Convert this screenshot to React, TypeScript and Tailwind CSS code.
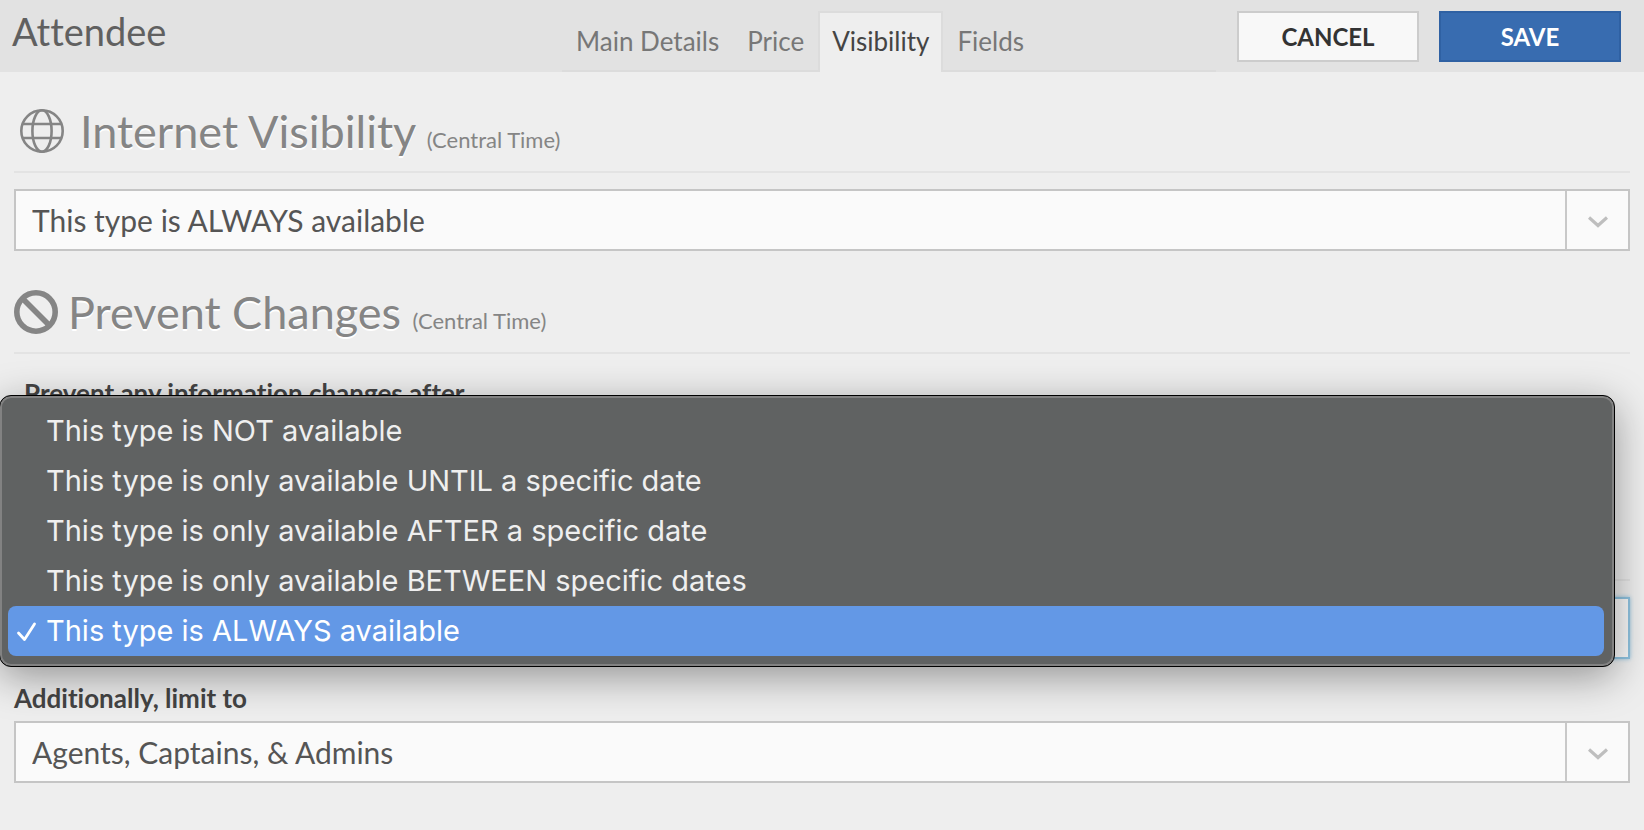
import type { ReactNode, SelectHTMLAttributes } from "react";

const TABS = ["Main Details", "Price", "Visibility", "Fields"];

const AVAILABILITY = [
  "This type is NOT available",
  "This type is only available UNTIL a specific date",
  "This type is only available AFTER a specific date",
  "This type is only available BETWEEN specific dates",
  "This type is ALWAYS available",
];

const CURRENT = "This type is ALWAYS available";

function GlobeIcon() {
  return (
    <svg viewBox="0 0 56 44" fill="none" stroke="currentColor" strokeWidth="2.6" className="w-14 h-11 shrink-0" aria-hidden="true">
      <circle cx="28" cy="22" r="20.7" />
      <ellipse cx="28" cy="22" rx="9.6" ry="20.7" />
      <line x1="8.5" y1="15" x2="47.5" y2="15" />
      <line x1="8.5" y1="29" x2="47.5" y2="29" />
    </svg>
  );
}

function BanIcon() {
  return (
    <svg viewBox="0 0 44 44" fill="none" stroke="currentColor" strokeWidth="5.6" className="w-11 h-11 shrink-0" aria-hidden="true">
      <circle cx="22" cy="22" r="19.2" />
      <line x1="9" y1="9" x2="35" y2="35" />
    </svg>
  );
}

function SectionTitle({ icon, title }: { icon: ReactNode; title: string }) {
  return (
    <div className="flex items-center gap-2.5 pb-[13px] border-b-2 border-[#e3e3e3] text-[#858585]">
      {icon}
      <h2 className="text-[45px] leading-[54px] [text-shadow:0_2px_0_#fff]">
        {title} <small className="text-[22px] leading-none [text-shadow:none]">(Central Time)</small>
      </h2>
    </div>
  );
}

function SelectBox({ children, ...props }: SelectHTMLAttributes<HTMLSelectElement>) {
  return (
    <div className="relative">
      <select
        {...props}
        className="block w-full h-[62px] appearance-none rounded-none border-2 border-[#c5c5c5] bg-[#fafafa] pl-4 pr-20 text-[30px] text-[#555] outline-none"
      >
        {children}
      </select>
      <div className="absolute inset-y-0.5 right-0.5 w-[63px] border-l-2 border-[#c8c8c8] flex items-center justify-center pointer-events-none">
        <svg viewBox="0 0 20 12" fill="none" stroke="#bebebe" strokeWidth="3.2" className="w-5 h-3 mt-1" aria-hidden="true">
          <path d="M1 1.5 L10 9.5 L19 1.5" />
        </svg>
      </div>
    </div>
  );
}

function AvailabilityMenu() {
  return (
    <ul
      role="listbox"
      aria-label="Availability"
      className="absolute -left-[15px] right-[15px] -bottom-2 z-10 rounded-[12px] border border-black bg-[#606262] pl-2 pr-2.5 py-2.5 text-[29px] leading-[50px] text-[#efefef] shadow-[inset_0_0_0_2px_#828282,0_10px_40px_rgba(0,0,0,0.38)] font-['Inter','Liberation_Sans',sans-serif]"
    >
      {AVAILABILITY.map((label) => {
        const selected = label === CURRENT;
        return (
          <li
            key={label}
            role="option"
            aria-selected={selected}
            className={
              selected
                ? "flex items-center h-[50px] rounded-[8px] bg-[#6398e6] text-white"
                : "flex items-center h-[50px]"
            }
          >
            <span className="w-[38px] pl-2 shrink-0">
              {selected && (
                <svg viewBox="0 0 22 22" fill="none" stroke="currentColor" strokeWidth="2.8" strokeLinecap="round" strokeLinejoin="round" className="w-[22px] h-[22px]" aria-hidden="true">
                  <path d="M2.5 13 L8.5 19.5 L18.5 4" />
                </svg>
              )}
            </span>
            {label}
          </li>
        );
      })}
    </ul>
  );
}

export default function App() {
  return (
    <div className="min-h-screen overflow-x-hidden bg-[#eee] text-[#444] font-['Lato','Liberation_Sans',sans-serif] [font-variant-ligatures:none]">
      <header className="h-[72px] bg-[#e2e2e2] grid grid-cols-[562fr_654fr_428fr]">
        <h1 className="pl-3 text-[38px] leading-[62px] text-[#606060]">Attendee</h1>
        <nav className="flex items-end border-b-2 border-[#dcdcdc]">
          {TABS.map((tab) => (
            <a
              key={tab}
              href="#"
              className={
                tab === "Visibility"
                  ? "h-[61px] -mb-0.5 px-3 border-2 border-b-0 border-[#dcdcdc] bg-[#eee] text-[26px] leading-[56px] text-[#444] whitespace-nowrap"
                  : "h-[61px] -mb-0.5 px-3 border-2 border-transparent text-[26px] leading-[56px] text-[#777] whitespace-nowrap"
              }
            >
              {tab}
            </a>
          ))}
        </nav>
        <div className="flex justify-end gap-5 pt-[11px] pr-[23px]">
          <button className="w-[182px] h-[51px] border-2 border-[#ccc] bg-[#f8f8f8] text-2xl font-bold text-[#333]">
            CANCEL
          </button>
          <button className="w-[182px] h-[51px] border-2 border-[#2f61a3] bg-[#386cb0] text-2xl font-bold text-white">
            SAVE
          </button>
        </div>
      </header>

      <main className="px-3.5 pt-8">
        <section>
          <SectionTitle icon={<GlobeIcon />} title="Internet Visibility" />
          <div className="mt-4">
            <SelectBox aria-label="Internet Visibility" defaultValue={CURRENT}>
              {AVAILABILITY.map((label) => (
                <option key={label}>{label}</option>
              ))}
            </SelectBox>
          </div>
        </section>

        <section className="mt-[34px]">
          <SectionTitle icon={<BanIcon />} title="Prevent Changes" />
          <p className="pt-[23px] pl-2.5 pb-[170px] text-[26px] leading-8 font-bold">
            Prevent any information changes after
          </p>
        </section>

        <section className="border-t-2 border-[#e3e3e3] pt-4">
          <div className="relative">
            <select
              aria-label="Availability"
              defaultValue={CURRENT}
              className="block w-full h-[62px] appearance-none rounded-none border-2 border-[#8fc3e0] bg-[#fafafa] pl-4 text-[30px] text-[#555] outline-none shadow-[0_0_4px_#8fc3e0]"
            >
              {AVAILABILITY.map((label) => (
                <option key={label}>{label}</option>
              ))}
            </select>
            <AvailabilityMenu />
          </div>
          <label htmlFor="limit" className="block mt-[23px] mb-[7px] text-[26px] leading-8 font-bold">
            Additionally, limit to
          </label>
          <SelectBox id="limit">
            <option>Agents, Captains, &amp; Admins</option>
          </SelectBox>
        </section>
      </main>
    </div>
  );
}
